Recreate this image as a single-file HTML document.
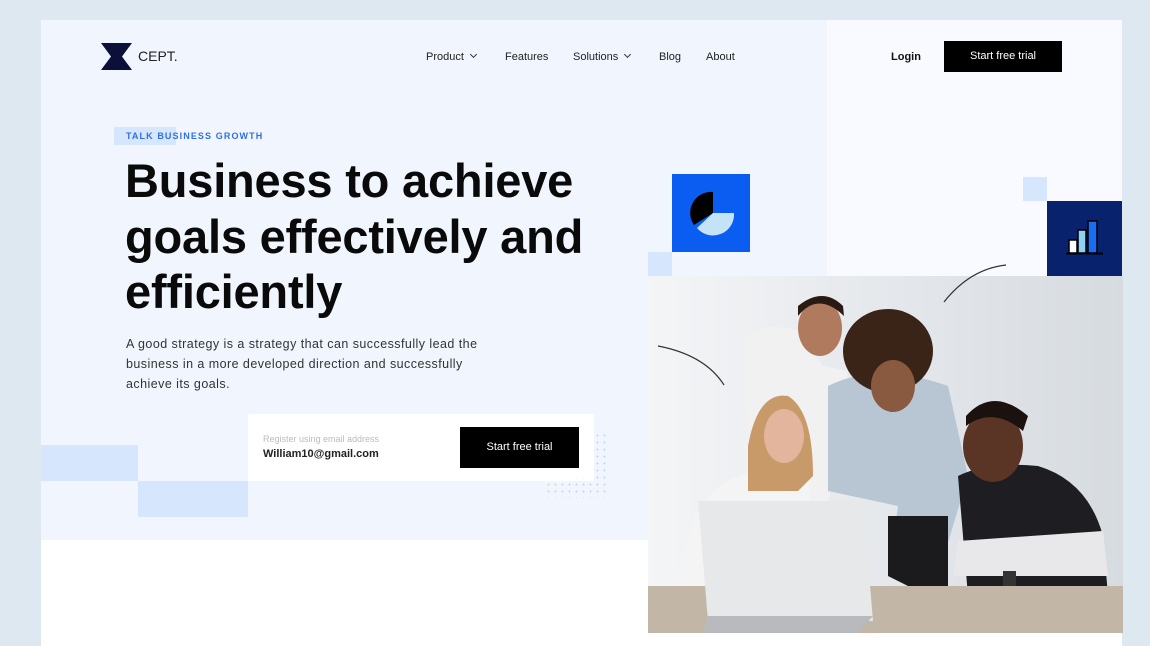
<!DOCTYPE html>
<html><head><meta charset="utf-8"><style>
*{margin:0;padding:0;box-sizing:border-box}
body{width:1150px;height:646px;background:#dde8f0;font-family:"Liberation Sans",sans-serif;position:relative;overflow:hidden}
.a{position:absolute}
.card{left:41px;top:20px;width:1081px;height:626px;background:#fff}
.nav{font-size:11px;color:#222;top:51px}
.chev{display:inline-block;width:5px;height:5px;border-right:1.3px solid #333;border-bottom:1.3px solid #333;transform:rotate(45deg);margin-left:7px;position:relative;top:-3px}
</style></head><body>
<div class="a card"></div>
<div class="a" style="left:41px;top:20px;width:786px;height:520px;background:#f1f6fe"></div>
<div class="a" style="left:827px;top:20px;width:295px;height:256px;background:#f8faff"></div>
<!-- logo -->
<svg class="a" style="left:101px;top:43px" width="32" height="27" viewBox="0 0 32 27"><path d="M0 0H31L21 13.5L31 27H0L10 13.5Z" fill="#0b0f3a"/></svg>
<div class="a" style="left:138px;top:48px;font-size:14px;color:#222">CEPT.</div>
<div class="a nav" style="left:426px">Product<span class="chev"></span></div>
<div class="a nav" style="left:505px">Features</div>
<div class="a nav" style="left:573px">Solutions<span class="chev"></span></div>
<div class="a nav" style="left:659px">Blog</div>
<div class="a nav" style="left:706px">About</div>
<div class="a nav" style="left:891px;font-weight:bold;color:#111">Login</div>
<div class="a" style="left:944px;top:41px;width:118px;height:31px;background:#000;color:#fff;font-size:11px;text-align:center;line-height:31px">Start free trial</div>
<div class="a" style="left:114px;top:127px;width:62px;height:18px;background:#d6e6fc"></div>
<div class="a" style="left:126px;top:131px;font-size:9px;color:#2f6fe8;letter-spacing:1.1px;font-weight:bold">TALK BUSINESS GROWTH</div>
<div class="a" style="left:125px;top:153px;font-size:47px;font-weight:bold;color:#0a0a0a;line-height:55.5px;letter-spacing:-0.2px">Business to achieve<br>goals effectively and<br>efficiently</div>
<div class="a" style="left:126px;top:334px;font-size:12.5px;color:#333;line-height:20px;letter-spacing:0.45px">A good strategy is a strategy that can successfully lead the<br>business in a more developed direction and successfully<br>achieve its goals.</div>
<div class="a" style="left:41px;top:445px;width:97px;height:36px;background:#d6e6fd"></div>
<div class="a" style="left:138px;top:481px;width:110px;height:36px;background:#d6e6fd"></div>
<div class="a" style="left:248px;top:414px;width:346px;height:67px;background:#fff"></div>
<div class="a" style="left:263px;top:434px;font-size:9px;color:#bbb">Register using email address</div>
<div class="a" style="left:263px;top:448px;font-size:11px;color:#222;font-weight:bold">William10@gmail.com</div>
<div class="a" style="left:460px;top:427px;width:119px;height:41px;background:#000;color:#fff;font-size:11px;text-align:center;line-height:41px">Start free trial</div>
<div class="a" style="left:545px;top:432px;width:62px;height:66px;background-image:radial-gradient(#c9d3e3 0.8px,transparent 1px);background-size:7px 7px;clip-path:polygon(80% 0,100% 0,100% 100%,0 100%,0 70%,80% 70%)"></div>
<!-- icon blocks -->
<div class="a" style="left:648px;top:252px;width:24px;height:24px;background:#d6e6fd"></div>
<div class="a" style="left:672px;top:174px;width:78px;height:78px;background:#0a5df0"></div>
<svg class="a" style="left:688px;top:191px" width="46" height="46" viewBox="0 0 46 46"><path d="M25 1A21 21 0 0 0 6 34L25 22Z" fill="#000"/><path d="M25 22H46A21 21 0 0 1 9 37Z" fill="#c5e3f7"/></svg>
<div class="a" style="left:1023px;top:177px;width:24px;height:24px;background:#d6e6fd"></div>
<div class="a" style="left:1047px;top:201px;width:75px;height:75px;background:#08226e"></div>
<svg class="a" style="left:1064px;top:218px" width="42" height="40" viewBox="0 0 42 40"><rect x="5" y="22" width="8" height="13" fill="#fff" stroke="#000" stroke-width="1.5"/><rect x="14" y="12" width="8" height="23" fill="#8fd0f5" stroke="#000" stroke-width="1.5"/><rect x="24" y="3" width="9" height="32" fill="#1a6cf5" stroke="#000" stroke-width="1.5"/><path d="M2 35.5H39" stroke="#000" stroke-width="2"/></svg>
<!-- photo -->
<svg class="a" style="left:648px;top:276px" width="475" height="357" viewBox="0 0 475 357">
<defs><linearGradient id="bg" x1="0" x2="1"><stop offset="0" stop-color="#f4f5f7"/><stop offset="1" stop-color="#d6dbe0"/></linearGradient></defs>
<rect width="475" height="357" fill="url(#bg)"/>
<path d="M95 60Q120 45 150 55L175 90L200 95L180 230L100 230Z" fill="#f1f1f1"/>
<ellipse cx="172" cy="52" rx="22" ry="28" fill="#b07a5e"/><path d="M150 40Q170 15 196 40L195 30Q175 10 150 30Z" fill="#2a1a14"/>
<path d="M45 245Q60 205 110 195L160 200L170 330H20Z" fill="#f4f4f4"/>
<path d="M100 170Q110 115 140 120Q165 135 165 200L150 215H100Z" fill="#c89a6a"/><ellipse cx="136" cy="160" rx="20" ry="27" fill="#e3b59c"/>
<path d="M180 110Q230 85 300 110L320 200L290 300L240 300L250 230L180 215Z" fill="#b8c6d4"/>
<ellipse cx="240" cy="75" rx="45" ry="42" fill="#3a2418"/><ellipse cx="245" cy="110" rx="22" ry="26" fill="#8a5a40"/>
<path d="M240 300V240L300 240V330Z" fill="#1b1b1d"/>
<path d="M310 200Q340 185 390 190Q440 205 455 260L460 320H320Z" fill="#1e1e22"/>
<path d="M310 265L455 255L460 300H305Z" fill="#e8e8ea"/>
<ellipse cx="345" cy="170" rx="30" ry="36" fill="#5a3525"/><path d="M318 140Q345 110 380 140L375 155Q345 130 318 150Z" fill="#1b1210"/>
<path d="M0 310H475V357H0Z" fill="#c2b6a6"/>
<path d="M50 225H215L225 345H60Z" fill="#e6e8ea"/><path d="M60 340H225L210 357H55Z" fill="#b8babd"/>
<rect x="355" y="295" width="13" height="15" fill="#333"/>
</svg>
<svg class="a" style="left:640px;top:255px" width="380" height="140" fill="none" stroke="#333" stroke-width="1.2"><path d="M304 47Q330 14 366 10"/><path d="M18 91Q65 100 84 130"/></svg>
</body></html>
